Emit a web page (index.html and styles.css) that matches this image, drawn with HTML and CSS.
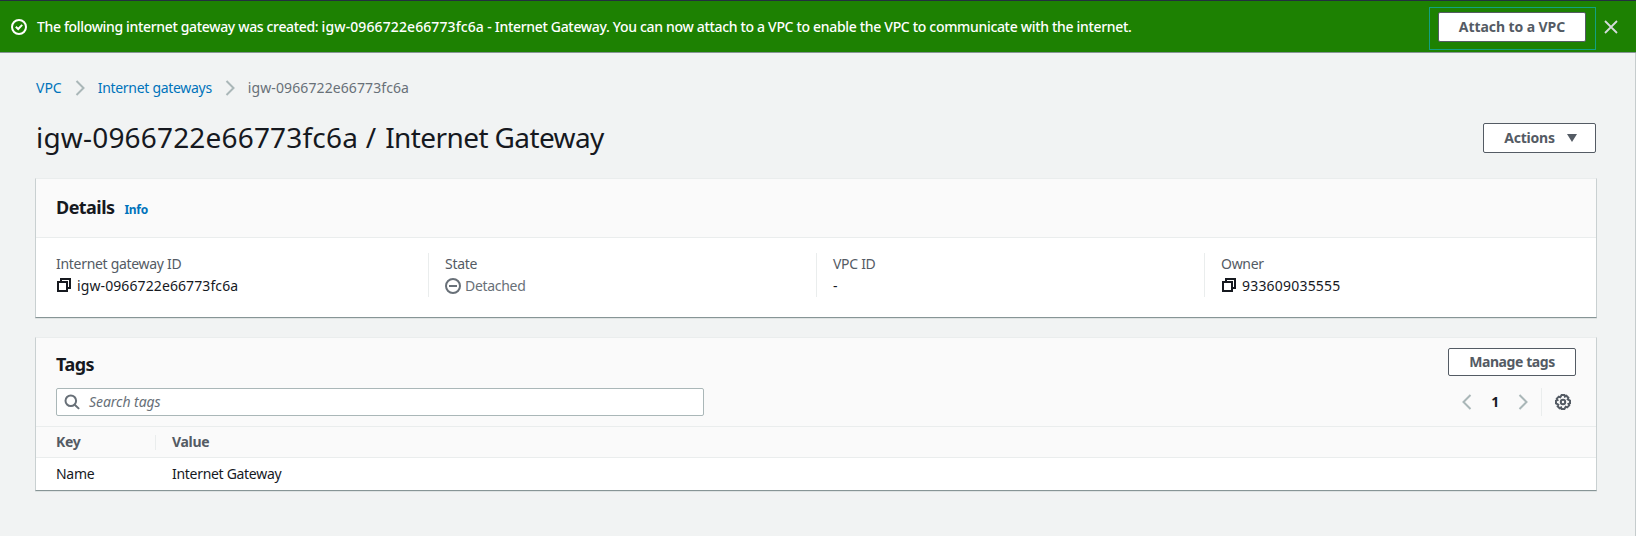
FILE: index.html
```html
<!DOCTYPE html>
<html lang="en">
<head>
<meta charset="utf-8">
<title>Internet Gateway</title>
<link rel="stylesheet" href="styles.css">
</head>
<body>
<div class="flash">
  <svg class="icon" viewBox="0 0 16 16"><circle cx="8" cy="8" r="7"/><path d="M4.8 7.8 7.2 10l4-4.1"/></svg>
  <span class="flash-text"><span class="lead">The following internet gateway was created: </span><span class="id">igw-0966722e66773fc6a</span> - Internet Gateway. You can now attach to a VPC to enable the VPC to communicate with the internet.</span>
  <div class="flash-action"><button class="btn attach">Attach to a VPC</button></div>
  <svg class="icon close" viewBox="0 0 16 16"><path d="m2 2 12 12M14 2 2 14"/></svg>
</div>
<main class="page">
  <nav class="crumbs">
    <a class="c-vpc">VPC</a>
    <svg class="icon chev" viewBox="0 0 16 16"><path d="m4.5 1 7 7-7 7"/></svg>
    <a class="c-igws">Internet gateways</a>
    <svg class="icon chev" viewBox="0 0 16 16"><path d="m4.5 1 7 7-7 7"/></svg>
    <span class="id">igw-0966722e66773fc6a</span>
  </nav>
  <div class="title-row">
    <h1><span class="id">igw-0966722e66773fc6a</span> <span class="slash">/</span> Internet Gateway</h1>
    <button class="btn actions">Actions<svg class="icon caret" viewBox="0 0 16 16"><path d="M3 4h10l-5 8z"/></svg></button>
  </div>
  <section class="panel details">
    <header class="panel-head"><h2>Details</h2><a class="info">Info</a></header>
    <div class="cols">
      <div class="col"><div class="label">Internet gateway ID</div><div class="value"><svg class="icon copy" viewBox="0 0 16 16"><path d="M2 5h9v9H2zM5 4V2h9v9h-2"/></svg><span class="id">igw-0966722e66773fc6a</span></div></div>
      <div class="col"><div class="label">State</div><div class="value muted"><svg class="icon" viewBox="0 0 16 16"><circle cx="8" cy="8" r="7"/><path d="M4 8h8"/></svg><span class="state">Detached</span></div></div>
      <div class="col"><div class="label">VPC ID</div><div class="value">-</div></div>
      <div class="col"><div class="label">Owner</div><div class="value"><svg class="icon copy" viewBox="0 0 16 16"><path d="M2 5h9v9H2zM5 4V2h9v9h-2"/></svg><span class="owner">933609035555</span></div></div>
    </div>
  </section>
  <section class="panel tags">
    <header class="tags-head">
      <div class="tags-title"><h2>Tags</h2><button class="btn manage">Manage tags</button></div>
      <div class="tools">
        <div class="search"><svg class="icon" viewBox="0 0 16 16"><circle cx="6.8" cy="6.8" r="5.3"/><path d="m10.7 10.7 4.4 4.2"/></svg><span>Search tags</span></div>
        <div class="pager">
          <svg class="icon chev" viewBox="0 0 16 16"><path d="m11.5 1-7 7 7 7"/></svg>
          <b>1</b>
          <svg class="icon chev" viewBox="0 0 16 16"><path d="m4.5 1 7 7-7 7"/></svg>
          <div class="gear"><svg class="icon" viewBox="0 0 16 16"><path d="M6.600 1h2.800l.5 1.500 1.500-.7 2 2-.7 1.500L15 6.600v2.800l-1.500.5.7 1.500-2 2-1.500-.7L9.400 15H6.600l-.5-1.500-1.500.7-2-2 .7-1.500L1 9.400V6.600l1.500-.5-.7-1.500 2-2 1.500.7z"/><circle cx="8" cy="8" r="2.2"/></svg></div>
        </div>
      </div>
    </header>
    <div class="row th"><div class="k">Key</div><div class="v">Value</div></div>
    <div class="row"><div class="k">Name</div><div class="v">Internet Gateway</div></div>
  </section>
</main>
</body>
</html>
```
FILE: styles.css
```css
* { box-sizing: border-box; }
body { margin: 0; height: 536px; overflow: hidden; background: #f1f3f3; color: #16191f; font: 14px/22px "Noto Sans", "Open Sans", sans-serif; letter-spacing: -0.3px; white-space: nowrap; }
h1, h2 { margin: 0; }
.id { letter-spacing: 0.1px; }
.icon { width: 16px; height: 16px; flex: none; fill: none; stroke: currentColor; stroke-width: 2; }
.flash { height: 53px; display: flex; align-items: center; padding-left: 11px; padding-right: 17px; background: #1d8102; border-top: 1px solid #232f3e; border-bottom: 1px solid #879596; color: #fff; }
.flash-text { margin-left: 10px; padding-top: 1px; font-weight: 500; letter-spacing: -0.32px; }
.lead { letter-spacing: -0.34px; }
.flash-action { margin-left: auto; margin-top: 3px; width: 167px; height: 43px; padding: 4px 8px; border: 1px solid #12a182; }
.flash .close { margin-left: 7px; stroke-width: 1.8; color: #d5dbdb; }
.btn { display: flex; align-items: center; justify-content: center; height: 30px; padding: 0; background: #fff; border: 1px solid #545b64; border-radius: 2px; color: #545b64; font: bold 14px/22px "Noto Sans", sans-serif; letter-spacing: -0.08px; }
.attach { width: 148px; }
.page { height: 483px; padding: 24px 38px 0 35px; border-right: 1px solid #c6cccd; }
.crumbs { display: flex; align-items: center; height: 22px; padding-left: 1px; color: #687078; }
.crumbs a, .info { color: #0073bb; }
.crumbs .c-vpc { letter-spacing: 0; }
.crumbs .chev { margin: 0 10px; }
.chev { color: #aab7b8; }
.title-row { display: flex; justify-content: space-between; align-items: center; margin-top: 21px; height: 36px; padding: 0 1px; }
h1 { font-size: 28px; line-height: 36px; font-weight: 400; padding-bottom: 2px; letter-spacing: -0.6px; }
h1 .id { letter-spacing: 0.18px; }
.slash { margin: 0 3px 0 1px; }
.actions { width: 113px; padding-left: 5px; letter-spacing: -0.2px; }
.caret { margin-left: 9px; fill: #545b64; stroke: none; }
.panel { background: #fff; border: 1px solid #c9d0d1; border-top-color: #eaeded; border-bottom-color: #879596; box-shadow: 0 1px 0 #dfe3e3; }
.details { margin-top: 22px; height: 140px; }
.panel-head { height: 59px; display: flex; align-items: baseline; padding: 17px 20px 0; background: #fafafa; border-bottom: 1px solid #eaeded; }
h2 { font-size: 18px; line-height: 22px; font-weight: 700; letter-spacing: -0.55px; }
.info { margin-left: 10px; font-size: 12px; font-weight: 700; }
.cols { display: grid; grid-template-columns: 392px 388px 388px 1fr; padding-top: 15px; }
.col { height: 44px; padding-left: 16px; border-left: 1px solid #eaeded; }
.col:first-child { padding-left: 20px; border: 0; }
.label { color: #545b64; }
.value { display: flex; align-items: center; }
.copy { margin-bottom: 2px; }
.value span { margin-left: 5px; }
.value .state { margin-left: 4px; }
.owner { letter-spacing: 0.2px; }
.muted { color: #687078; }
.tags { margin-top: 19px; height: 154px; }
.tags-head { height: 89px; padding: 10px 20px 0 20px; background: #fafafa; border-bottom: 1px solid #eaeded; }
.tags-title, .tools { display: flex; justify-content: space-between; }
.tags-title h2 { padding-top: 5px; height: 28px; }
.manage { width: 128px; height: 28px; letter-spacing: -0.42px; }
.tools { margin-top: 12px; align-items: center; }
.search { width: 648px; height: 28px; display: flex; align-items: center; padding-left: 7px; background: #fff; border: 1px solid #aab7b8; border-radius: 2px; color: #687078; font-style: italic; letter-spacing: -0.05px; }
.search span { margin-left: 9px; }
.pager { display: flex; align-items: center; }
.pager b { width: 40px; text-align: center; }
.gear { height: 28px; display: flex; align-items: center; margin-left: 10px; padding: 0 5px 0 13px; border-left: 1px solid #eaeded; color: #545b64; }
.row { display: flex; align-items: center; height: 32px; padding-left: 20px; }
.th { height: 31px; background: #fafafa; border-bottom: 1px solid #eaeded; color: #545b64; font-weight: 700; }
.k { width: 99px; }
.v { padding-left: 17px; }
.th .v { height: 15px; line-height: 14px; padding-left: 16px; border-left: 1px solid #eaeded; }
```
